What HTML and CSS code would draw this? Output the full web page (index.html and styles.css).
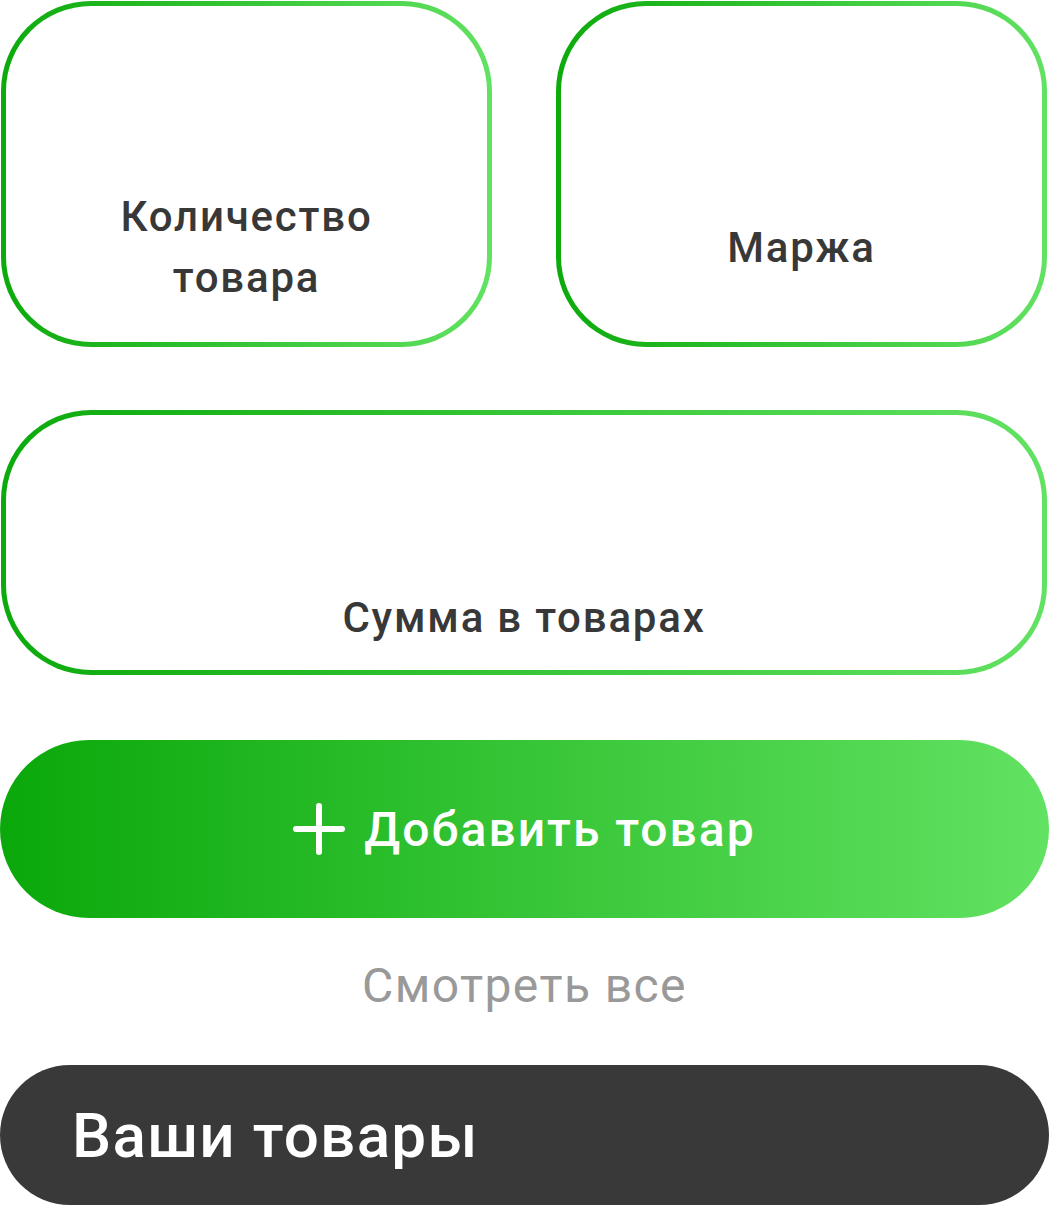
FILE: index.html
```html
<!DOCTYPE html>
<html lang="ru">
<head>
<meta charset="utf-8">
<link rel="stylesheet" href="styles.css">
</head>
<body>
<main class="page">
  <section class="stats-row">
    <div class="card card-small">
      <div class="card-label">Количество<br>товара</div>
    </div>
    <div class="card card-small">
      <div class="card-label">Маржа</div>
    </div>
  </section>
  <section class="card card-wide">
    <div class="card-label">Сумма в товарах</div>
  </section>
  <button class="add-btn" type="button">
    <svg class="plus" width="52" height="52" viewBox="0 0 52 52" aria-hidden="true">
      <path d="M26 3V49M3 26H49" stroke="#fff" stroke-width="6" stroke-linecap="round" fill="none"/>
    </svg>
    <span>Добавить товар</span>
  </button>
  <div class="see-all">Смотреть все</div>
  <div class="your-goods">Ваши товары</div>
</main>
</body>
</html>
```

FILE: styles.css
```css
* { box-sizing: border-box; }
html, body { margin: 0; padding: 0; background: #fff; }
body { font-family: Roboto, "Noto Sans", Arial, sans-serif; }

.page {
  width: 1049px;
  display: flex;
  flex-direction: column;
  padding-top: 1px;
}

.stats-row {
  display: grid;
  grid-template-columns: 491px 491px;
  column-gap: 64px;
  padding-left: 1px;
}

.card {
  border: 5px solid transparent;
  border-radius: 90px;
  background:
    linear-gradient(#fff, #fff) padding-box,
    linear-gradient(90deg, #0caa0c 0%, #62e262 100%) border-box;
  display: flex;
  flex-direction: column;
  justify-content: center;
  align-items: center;
}

.card-small {
  height: 346px;
  padding-top: 146px;
}

.card-wide {
  margin: 63px 2px 0 1px;
  height: 265px;
  padding-top: 150px;
}

.card-label {
  font-size: 42px;
  font-weight: 500;
  letter-spacing: 1.8px;
  line-height: 61px;
  color: #383838;
  text-align: center;
}

.add-btn {
  margin-top: 65px;
  height: 178px;
  width: 1049px;
  border: 0;
  border-radius: 89px;
  background: linear-gradient(90deg, #0aa80a 0%, #62e262 100%);
  display: flex;
  align-items: center;
  justify-content: center;
  gap: 19px;
  color: #fff;
  font-family: Roboto, "Noto Sans", Arial, sans-serif;
  font-size: 48px;
  font-weight: 500;
  letter-spacing: 2px;
  padding: 0;
}

.plus { display: block; }

.see-all {
  margin-top: 38px;
  text-align: center;
  font-size: 48px;
  letter-spacing: 1.4px;
  color: #999;
  line-height: 60px;
}

.your-goods {
  margin-top: 49px;
  height: 140px;
  border-radius: 70px;
  background: #393939;
  color: #fff;
  font-size: 62px;
  font-weight: 500;
  letter-spacing: 1.3px;
  display: flex;
  align-items: center;
  padding-left: 72px;
}
```
